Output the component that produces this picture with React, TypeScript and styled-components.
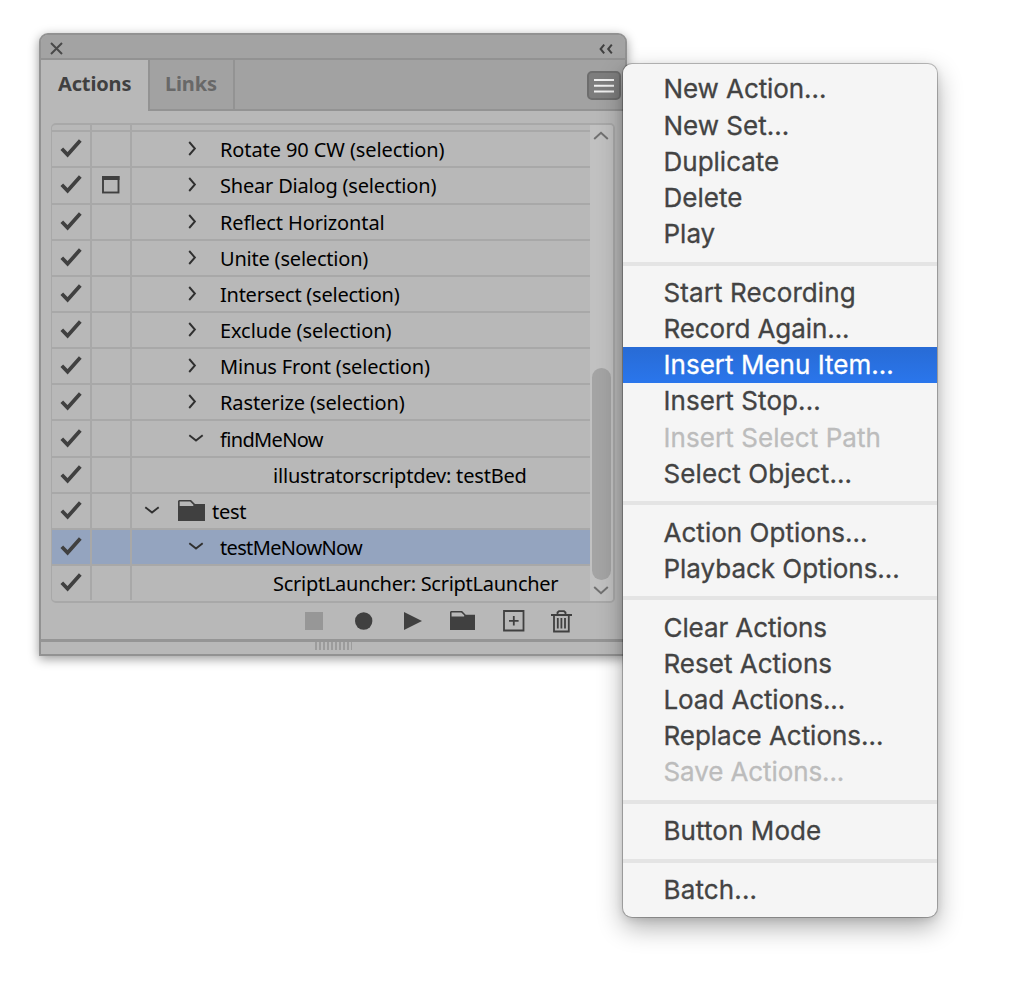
import React from 'react';
import styled, { createGlobalStyle, css } from 'styled-components';

const GlobalStyle = createGlobalStyle`
  * { box-sizing: border-box; }
  html, body { margin: 0; background: #fff; }
`;

const ROW = 36.17;

const Stage = styled.main`
  display: flex;
  align-items: flex-start;
  width: 1024px;
  height: 993px;
  overflow: hidden;
  padding: 33px 0 0 39px;
`;

const Panel = styled.section`
  display: flex;
  flex-direction: column;
  width: 588px;
  height: 623px;
  flex: none;
  border: 2px solid #929292;
  border-radius: 9px 9px 0 0;
  background: #b8b8b8;
  font-family: 'Noto Sans', sans-serif;
  box-shadow: 0 3px 11px rgba(0, 0, 0, 0.4);
`;

const TitleBar = styled.header`
  display: flex;
  align-items: center;
  justify-content: space-between;
  height: 25px;
  padding: 4px 12px 0 9px;
  background: #a3a3a3;
  border-bottom: 2px solid #929292;
  border-radius: 7px 7px 0 0;
`;

const TabBar = styled.nav`
  display: flex;
  align-items: stretch;
  height: 51px;
  background: #a2a2a2;
`;

const Tab = styled.div<{ $active?: boolean; $width: number }>`
  width: ${(p) => p.$width}px;
  padding: 9px 0 0 17px;
  font-size: 20px;
  line-height: 30px;
  font-weight: 700;
  letter-spacing: -0.15px;
  color: ${(p) => (p.$active ? '#404040' : '#686868')};
  background: ${(p) => (p.$active ? '#b8b8b8' : 'transparent')};
  ${(p) =>
    !p.$active &&
    css`
      padding-left: 15px;
      border: solid #939393;
      border-width: 0 2px 2px 2px;
    `}
`;

const TabSpace = styled.div`
  flex: 1;
  display: flex;
  justify-content: flex-end;
  padding: 11px 4px 0 0;
  border-bottom: 2px solid #939393;
`;

const MenuButton = styled.button`
  display: flex;
  align-items: center;
  justify-content: center;
  width: 34px;
  height: 29px;
  padding: 0;
  border: 2px solid #6d6d6d;
  border-radius: 5px;
  background: #7d7d7d;
`;

const ListFrame = styled.div`
  display: flex;
  width: 564px;
  height: 480px;
  margin: 12px 0 0 10px;
  border: 2px solid #a8a8a8;
  border-left-width: 1px;
  border-radius: 5px;
  overflow: hidden;
`;

const List = styled.div`
  display: flex;
  flex-direction: column;
  width: 538px;
`;

const Row = styled.div<{ $selected?: boolean; $partial?: boolean }>`
  display: grid;
  grid-template-columns: 40.4px 40px 1fr;
  flex: none;
  height: ${(p) => (p.$partial ? 5.2 : ROW)}px;
  border-top: ${(p) => (p.$partial ? 0 : 2)}px solid #a8a8a8;
  background: ${(p) => (p.$selected ? '#94a4bf' : 'transparent')};
`;

const Cell = styled.div`
  display: flex;
  align-items: center;
  justify-content: center;
  border-right: 2px solid #a8a8a8;
`;

const NameCell = styled.div<{ $indent: number }>`
  display: flex;
  align-items: center;
  padding-left: ${(p) => p.$indent}px;
`;

const Twisty = styled.span<{ $width: number }>`
  display: flex;
  width: ${(p) => p.$width}px;
`;

const FolderSlot = styled.span`
  display: flex;
  width: 34px;
`;

const Label = styled.span<{ $spacing: number }>`
  font-size: 20px;
  line-height: 30px;
  padding-top: 2px;
  color: #000;
  white-space: nowrap;
  letter-spacing: ${(p) => p.$spacing}px;
`;

const ScrollTrack = styled.div`
  display: flex;
  flex-direction: column;
  align-items: center;
  justify-content: space-between;
  flex: 1;
  padding: 6px 1px 6px 0;
  background: #c1c1c1;
`;

const Thumb = styled.div`
  width: 19px;
  height: 212px;
  margin: 221px 0 0 1px;
  border-radius: 10px;
  background: #a4a4a4;
`;

const Footer = styled.footer`
  display: flex;
  align-items: center;
  height: 36px;
  padding-left: 264px;
`;

const Tool = styled.span<{ $width: number }>`
  display: flex;
  flex: none;
  width: ${(p) => p.$width}px;
`;

const Resize = styled.div`
  display: flex;
  justify-content: center;
  flex: 1;
  padding-top: 0;
  border-top: 3px solid #959595;
`;

const Grip = styled.div`
  width: 37px;
  height: 8px;
  background: repeating-linear-gradient(90deg, #9c9c9c 0 2px, #b8b8b8 2px 4px);
`;

const Menu = styled.div`
  position: absolute;
  left: 623px;
  top: 64px;
  width: 314px;
  height: 853px;
  padding: 7.4px 0 0;
  border-radius: 9px;
  background: #f5f5f5;
  box-shadow: 0 0 0 1px rgba(0, 0, 0, 0.24), 0 10px 26px rgba(0, 0, 0, 0.32), 0 2px 8px rgba(0, 0, 0, 0.12);
  font-family: Inter, sans-serif;
`;

const Item = styled.div<{ $state?: 'selected' | 'disabled'; $spacing: number }>`
  height: ${ROW}px;
  padding-left: 40.5px;
  font-size: 26px;
  line-height: 36.4px;
  white-space: nowrap;
  letter-spacing: ${(p) => p.$spacing}px;
  -webkit-text-stroke: 0.3px currentColor;
  color: ${(p) => (p.$state === 'selected' ? '#fff' : p.$state === 'disabled' ? '#bcbcbc' : '#434343')};
  background: ${(p) => (p.$state === 'selected' ? 'linear-gradient(#286bd5, #2a76ec)' : 'none')};
`;

const Separator = styled.hr`
  height: 4px;
  margin: 9.4px 0;
  border: 0;
  background: #e4e4e4;
`;

const Check = () => (
  <svg width="22" height="20" viewBox="0 0 22 20" fill="none" stroke="#404040" strokeWidth="3.7">
    <path d="M1.8 9.7 7.6 15.7 20.3 1.6" />
  </svg>
);

const Chevron = ({ open }: { open?: boolean }) =>
  open ? (
    <svg width="16" height="16" viewBox="0 0 16 16" fill="none" stroke="#303030" strokeWidth="1.9">
      <path d="M1.3 4.2 8 9.6 14.7 4.2" />
    </svg>
  ) : (
    <svg width="16" height="16" viewBox="0 0 16 16" fill="none" stroke="#303030" strokeWidth="1.9">
      <path d="M1.2 1 6.9 7.5 1.2 14" />
    </svg>
  );

const Folder = ({ width = 27, height = 22 }: { width?: number; height?: number }) => (
  <svg width={width} height={height} viewBox="0 0 27 22" preserveAspectRatio="none">
    <path fill="#404040" d="M0 1 1 0h12l4 4h10v17H0z" />
    <path fill="#b8b8b8" d="M1.7 1.6h10.4l3.2 3.2v1.3H1.7z" />
  </svg>
);

const DialogBox = () => (
  <svg width="18" height="18" viewBox="0 0 18 18">
    <rect x="1" y="1" width="15.5" height="15.5" fill="none" stroke="#404040" strokeWidth="1.9" />
    <path fill="#404040" d="M0 0h17.5v4H0z" />
  </svg>
);

const ScrollArrow = ({ down }: { down?: boolean }) => (
  <svg width="16" height="9" viewBox="0 0 16 9" fill="none" stroke="#717171" strokeWidth="2">
    <path d={down ? 'M1.2 1 8 7.2 14.8 1' : 'M1.2 8 8 1.8 14.8 8'} />
  </svg>
);

type Entry = { name: string; kind: 'step' | 'open' | 'leaf' | 'set'; dialog?: boolean; selected?: boolean; spacing?: number };

const entries: Entry[] = [
  { name: 'Rotate 90 CW (selection)', kind: 'step', spacing: -0.1 },
  { name: 'Shear Dialog (selection)', kind: 'step', dialog: true, spacing: -0.19 },
  { name: 'Reflect Horizontal', kind: 'step', spacing: -0.13 },
  { name: 'Unite (selection)', kind: 'step', spacing: -0.2 },
  { name: 'Intersect (selection)', kind: 'step', spacing: -0.24 },
  { name: 'Exclude (selection)', kind: 'step', spacing: -0.08 },
  { name: 'Minus Front (selection)', kind: 'step', spacing: -0.17 },
  { name: 'Rasterize (selection)', kind: 'step', spacing: -0.1 },
  { name: 'findMeNow', kind: 'open', spacing: -0.65 },
  { name: 'illustratorscriptdev: testBed', kind: 'leaf', spacing: -0.19 },
  { name: 'test', kind: 'set', spacing: -0.3 },
  { name: 'testMeNowNow', kind: 'open', selected: true, spacing: -0.65 },
  { name: 'ScriptLauncher: ScriptLauncher', kind: 'leaf', spacing: -0.27 },
];

const indents = { step: 55.6, open: 55.6, leaf: 140.6, set: 11.6 };

type MenuEntry = { text: string; state?: 'selected' | 'disabled'; spacing?: number };

const groups: MenuEntry[][] = [
  [{ text: 'New Action...', spacing: -0.08 }, { text: 'New Set...' }, { text: 'Duplicate' }, { text: 'Delete' }, { text: 'Play' }],
  [
    { text: 'Start Recording', spacing: 0.1 },
    { text: 'Record Again...', spacing: -0.08 },
    { text: 'Insert Menu Item...', state: 'selected', spacing: 0.02 },
    { text: 'Insert Stop...', spacing: 0.08 },
    { text: 'Insert Select Path', state: 'disabled', spacing: 0.07 },
    { text: 'Select Object...', spacing: 0.1 },
  ],
  [{ text: 'Action Options...', spacing: 0.03 }, { text: 'Playback Options...', spacing: -0.03 }],
  [
    { text: 'Clear Actions', spacing: -0.1 },
    { text: 'Reset Actions' },
    { text: 'Load Actions...', spacing: -0.1 },
    { text: 'Replace Actions...', spacing: -0.03 },
    { text: 'Save Actions...', state: 'disabled', spacing: -0.1 },
  ],
  [{ text: 'Button Mode', spacing: 0.08 }],
  [{ text: 'Batch...', spacing: 0.15 }],
];

export default function App() {
  return (
    <Stage>
      <GlobalStyle />
      <Panel>
        <TitleBar>
          <svg width="13" height="13" viewBox="0 0 13 13" stroke="#494949" strokeWidth="2">
            <path d="M1 1l11 11M12 1 1 12" />
          </svg>
          <svg width="14" height="10" viewBox="0 0 14 10" fill="none" stroke="#404040" strokeWidth="2">
            <path d="M5.2 .7 1.6 5l3.6 4.3M12.8 .7 9.2 5l3.6 4.3" />
          </svg>
        </TitleBar>
        <TabBar>
          <Tab $active $width={107}>Actions</Tab>
          <Tab $width={87}>Links</Tab>
          <TabSpace>
            <MenuButton>
              <svg width="20" height="15" viewBox="0 0 20 15" fill="#f0f0f0">
                <path d="M0 1h20v2H0zM0 6.7h20v2H0zM0 12.4h20v2H0z" />
              </svg>
            </MenuButton>
          </TabSpace>
        </TabBar>
        <ListFrame>
          <List>
            <Row $partial>
              <Cell />
              <Cell />
            </Row>
            {entries.map((e) => (
              <Row key={e.name} $selected={e.selected}>
                <Cell><Check /></Cell>
                <Cell>{e.dialog && <DialogBox />}</Cell>
                <NameCell $indent={indents[e.kind]}>
                  {e.kind !== 'leaf' && (
                    <Twisty $width={e.kind === 'set' ? 34 : 32}>
                      <Chevron open={e.kind !== 'step'} />
                    </Twisty>
                  )}
                  {e.kind === 'set' && <FolderSlot><Folder /></FolderSlot>}
                  <Label $spacing={e.spacing ?? 0}>{e.name}</Label>
                </NameCell>
              </Row>
            ))}
          </List>
          <ScrollTrack>
            <ScrollArrow />
            <Thumb />
            <ScrollArrow down />
          </ScrollTrack>
        </ListFrame>
        <Footer>
          <Tool $width={50}>
            <svg width="18" height="18"><rect width="18" height="18" fill="#979797" /></svg>
          </Tool>
          <Tool $width={49}>
            <svg width="18" height="18"><circle cx="8.7" cy="9" r="8.7" fill="#404040" /></svg>
          </Tool>
          <Tool $width={46}>
            <svg width="18" height="18"><path d="M0 0 18 9 0 18z" fill="#404040" /></svg>
          </Tool>
          <Tool $width={53}>
            <Folder width={25} height={20} />
          </Tool>
          <Tool $width={48}>
            <svg width="22" height="22" fill="none" stroke="#404040" strokeWidth="1.8">
              <path d="M1 1h19.5v19.5H1zM10.8 6v9.6M6 10.8h9.6" />
            </svg>
          </Tool>
          <Tool $width={22}>
            <svg width="21" height="23" fill="none" stroke="#404040" strokeWidth="1.8">
              <path d="M0 5h21M3 5v16.5h14.8V5M6.5 5V2.5L8 1.2h5l1.5 1.3V5M6.8 8v10.5M10.4 8v10.5M14 8v10.5" />
            </svg>
          </Tool>
        </Footer>
        <Resize><Grip /></Resize>
      </Panel>
      <Menu>
        {groups.map((group, i) => (
          <React.Fragment key={i}>
            {i > 0 && <Separator />}
            {group.map((m) => (
              <Item key={m.text} $state={m.state} $spacing={m.spacing ?? 0}>{m.text}</Item>
            ))}
          </React.Fragment>
        ))}
      </Menu>
    </Stage>
  );
}
